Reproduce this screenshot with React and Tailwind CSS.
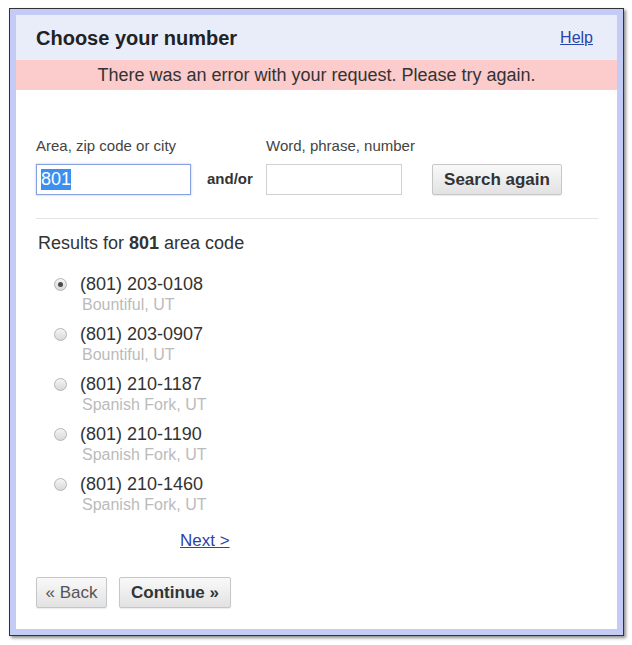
import React from 'react';

const numbers = [
  { phone: '(801) 203-0108', place: 'Bountiful, UT', checked: true },
  { phone: '(801) 203-0907', place: 'Bountiful, UT' },
  { phone: '(801) 210-1187', place: 'Spanish Fork, UT' },
  { phone: '(801) 210-1190', place: 'Spanish Fork, UT' },
  { phone: '(801) 210-1460', place: 'Spanish Fork, UT' },
];

const Radio = ({ checked }) => (
  <span className="mt-[4px] flex h-[13px] w-[13px] shrink-0 items-center justify-center rounded-full border border-[#b5b5b5] bg-gradient-to-b from-[#f4f4f4] to-[#d9d9d9]">
    {checked && <span className="h-[5px] w-[5px] rounded-full bg-[#4a4a4a]"></span>}
  </span>
);

const GrayButton = ({ children, className = '' }) => (
  <button
    className={`h-[31px] rounded-[2px] border border-[#c6c6c6] bg-gradient-to-b from-[#f9f9f9] to-[#e2e2e2] text-[17px] shadow-[0_1px_1px_rgba(0,0,0,0.08)] ${className}`}
  >
    {children}
  </button>
);

const App = () => {
  return (
    <div className="min-h-[645px] w-[632px] bg-white pl-[9px] pt-[8px] font-['Liberation_Sans',Arial,sans-serif]">
      <div className="w-[615px] border border-[#333] shadow-[2px_2px_3px_rgba(0,0,0,0.45)]">
        <div className="border-[6px] border-[#c4ccf6] bg-white">
          <div className="flex h-[45px] items-center justify-between bg-[#e9edf9] pl-[20px] pr-[24px]">
            <h1 className="text-[20px] font-bold text-[#222]">Choose your number</h1>
            <a href="#" className="text-[16px] text-[#2a44a8] underline">Help</a>
          </div>
          <div className="flex h-[30px] items-center justify-center bg-[#fccbcb] text-[18px] text-[#333]">
            There was an error with your request. Please try again.
          </div>

          <div className="pl-[20px] pr-[19px] pb-[21px] pt-[48px] text-[#333]">
            <div className="flex items-end">
              <div className="w-[155px]">
                <div className="mb-[10px] h-[16px] text-[15px] leading-[16px] text-[#444]">Area, zip code or city</div>
                <div className="flex h-[31px] items-center border border-[#86a3e0] pl-[4px] shadow-[0_0_2px_rgba(90,130,220,0.5)]">
                  <span className="bg-[#3a8ff0] text-[18px] leading-[21px] text-white">801</span>
                </div>
              </div>
              <div className="flex h-[31px] w-[75px] items-center pl-[16px] text-[15px] font-bold text-[#333]">and/or</div>
              <div className="w-[136px]">
                <div className="mb-[10px] h-[16px] whitespace-nowrap text-[15px] leading-[16px] text-[#444]">Word, phrase, number</div>
                <div className="h-[31px] border border-[#d0d0d0] bg-white"></div>
              </div>
              <GrayButton className="ml-[30px] w-[130px] font-bold text-[#333]">Search again</GrayButton>
            </div>

            <div className="mt-[23px] h-px bg-[#e4e4e4]"></div>

            <div className="mt-[15px] pl-[2px] text-[18px] leading-[18px] text-[#333]">
              Results for <span className="font-bold">801</span> area code
            </div>

            <div className="mt-[22px]">
              {numbers.map((n) => (
                <div key={n.phone} className="flex h-[50px] pl-[18px]">
                  <Radio checked={n.checked} />
                  <div className="ml-[13px]">
                    <div className="text-[18px] leading-[20px] text-[#333]">{n.phone}</div>
                    <div className="mt-[2px] pl-[2px] text-[16px] leading-[18px] text-[#bbb]">{n.place}</div>
                  </div>
                </div>
              ))}
            </div>

            <div className="mt-[8px] pl-[144px] text-[17px] leading-[18px]">
              <a href="#" className="text-[#2a44a8] underline">Next &gt;</a>
            </div>

            <div className="mt-[27px] flex gap-[12px]">
              <GrayButton className="w-[71px] text-[#555]">« Back</GrayButton>
              <GrayButton className="w-[112px] font-bold text-[#333]">Continue »</GrayButton>
            </div>
          </div>
        </div>
      </div>
    </div>
  );
};

export default App;
